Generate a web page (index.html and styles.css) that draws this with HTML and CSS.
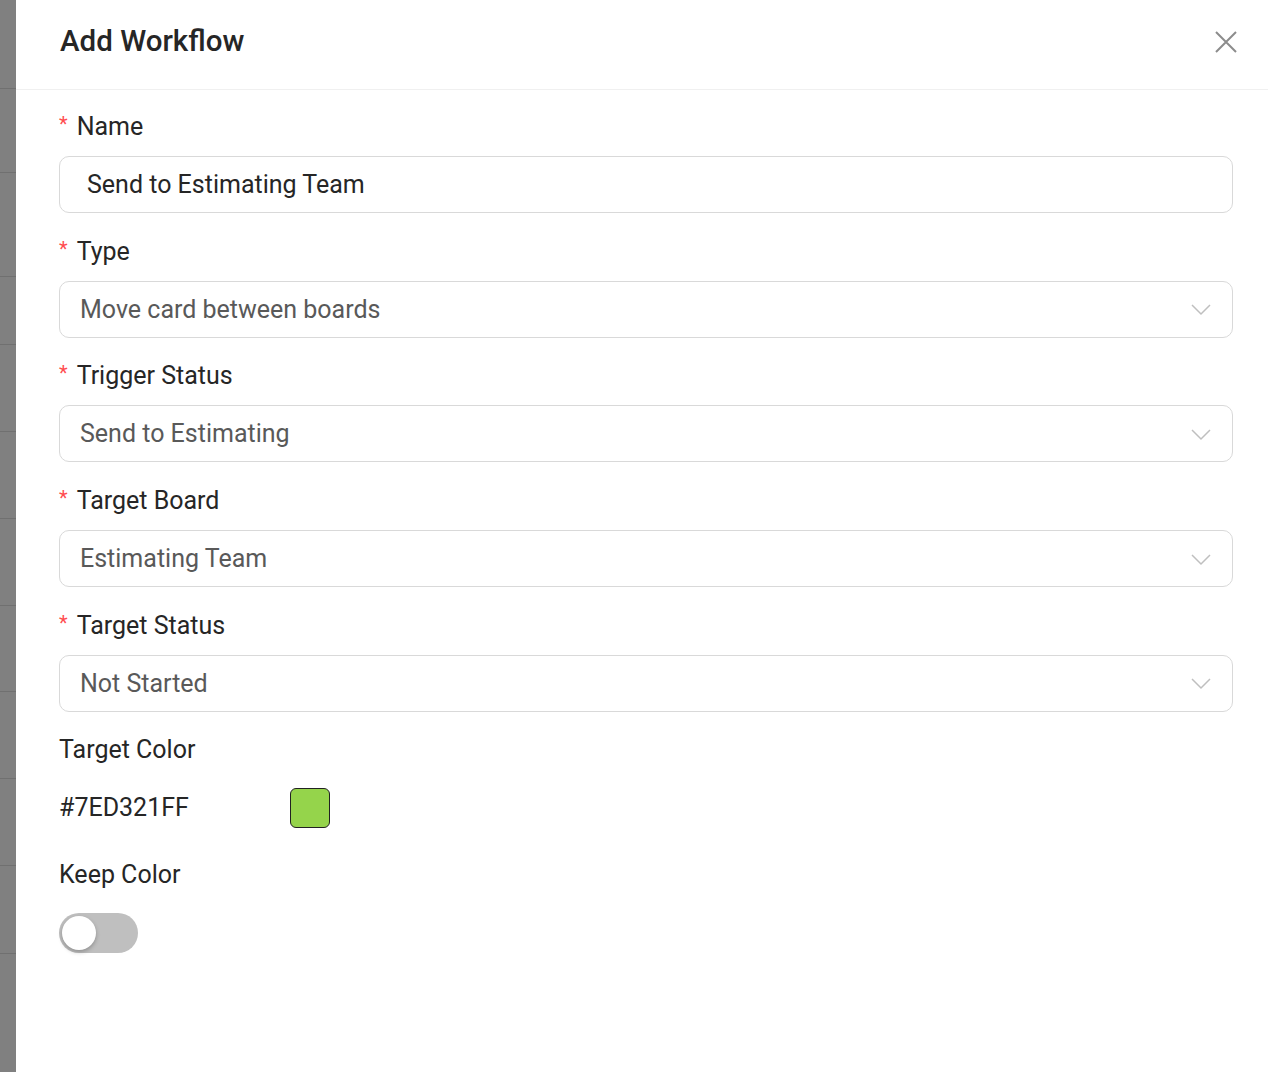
FILE: index.html
```html
<!DOCTYPE html>
<html lang="en">
<head>
<meta charset="UTF-8">
<meta name="viewport" content="width=device-width, initial-scale=1.0">
<title>Add Workflow</title>
<link rel="stylesheet" href="styles.css">
</head>
<body>

<div class="page">

<!-- BACKDROP (page behind the drawer) -->
<div class="backdrop">
  <div class="row" style="height:89px"></div>
  <div class="row" style="height:84px"></div>
  <div class="row" style="height:104px"></div>
  <div class="row" style="height:68px"></div>
  <div class="row" style="height:87px"></div>
  <div class="row" style="height:87px"></div>
  <div class="row" style="height:87px"></div>
  <div class="row" style="height:86px"></div>
  <div class="row" style="height:87px"></div>
  <div class="row" style="height:87px"></div>
  <div class="row" style="height:88px"></div>
</div>

<!-- DRAWER -->
<div class="drawer">

  <div class="drawer-header">
    <h1>Add Workflow</h1>
    <button class="close" aria-label="Close">
      <svg width="24" height="24" viewBox="0 0 24 24"><path d="M2 2 L22 22 M22 2 L2 22" stroke="#8c8c8c" stroke-width="2" fill="none"/></svg>
    </button>
  </div>

  <div class="drawer-body">

    <div class="item">
      <label class="required">Name</label>
      <div class="input">Send to Estimating Team</div>
    </div>

    <div class="item">
      <label class="required">Type</label>
      <div class="select">
        <span>Move card between boards</span>
        <svg class="arrow" width="20" height="12" viewBox="0 0 20 12"><path d="M1 1 L10 10 L19 1" stroke="#bfbfbf" stroke-width="1.5" fill="none"/></svg>
      </div>
    </div>

    <div class="item">
      <label class="required">Trigger Status</label>
      <div class="select">
        <span>Send to Estimating</span>
        <svg class="arrow" width="20" height="12" viewBox="0 0 20 12"><path d="M1 1 L10 10 L19 1" stroke="#bfbfbf" stroke-width="1.5" fill="none"/></svg>
      </div>
    </div>

    <div class="item">
      <label class="required">Target Board</label>
      <div class="select">
        <span>Estimating Team</span>
        <svg class="arrow" width="20" height="12" viewBox="0 0 20 12"><path d="M1 1 L10 10 L19 1" stroke="#bfbfbf" stroke-width="1.5" fill="none"/></svg>
      </div>
    </div>

    <div class="item">
      <label class="required">Target Status</label>
      <div class="select">
        <span>Not Started</span>
        <svg class="arrow" width="20" height="12" viewBox="0 0 20 12"><path d="M1 1 L10 10 L19 1" stroke="#bfbfbf" stroke-width="1.5" fill="none"/></svg>
      </div>
    </div>

    <div class="item">
      <label>Target Color</label>
      <div class="color-row">
        <span class="hex">#7ED321FF</span>
        <span class="swatch"></span>
      </div>
    </div>

    <div class="item">
      <label>Keep Color</label>
      <div class="switch-row">
        <span class="switch"><span class="knob"></span></span>
      </div>
    </div>

  </div>
</div>

</div>

</body>
</html>
```

FILE: styles.css
```css
/* RESET */
*{
  margin:0;
  padding:0;
  box-sizing:border-box;
  font-family:Roboto, "Liberation Sans", sans-serif;
}

body{
  background:#fff;
  color:#262626;
}

.page{
  display:flex;
  height:1072px;
  overflow:hidden;
}

/* BACKDROP */
.backdrop{
  width:16px;
  flex-shrink:0;
  background:#808080;
}

.backdrop .row{
  border-bottom:1px solid #707070;
}

/* DRAWER */
.drawer{
  flex:1;
  background:#fff;
  display:flex;
  flex-direction:column;
}

.drawer-header{
  height:90px;
  border-bottom:1px solid #f0f0f0;
  display:flex;
  align-items:center;
  justify-content:space-between;
  padding:0 30px 8px 44px;
}

.drawer-header h1{
  font-size:29.5px;
  font-weight:500;
  color:#262626;
}

.close{
  background:none;
  border:none;
  display:flex;
  padding:0;
  margin-top:3px;
}

.drawer-body{
  padding:19px 35px 0 43px;
}

/* FORM ITEMS */
.item{
  margin-bottom:20.7px;
}

.item label{
  display:block;
  height:36px;
  font-size:25px;
  line-height:36px;
  margin-bottom:11px;
  color:#262626;
}

.item label.required::before{
  content:"*";
  color:#ff4d4f;
  font-size:20px;
  line-height:1;
  margin-right:9px;
  vertical-align:4px;
}

.input,
.select{
  height:57px;
  border:1px solid #d9d9d9;
  border-radius:10px;
  font-size:25px;
  display:flex;
  align-items:center;
}

.input{
  padding:0 27px;
  color:#262626;
}

.select{
  padding:0 20px;
  color:#595959;
  justify-content:space-between;
}

.select .arrow{
  margin-right:1px;
  margin-top:2px;
}

/* COLOR */
.color-row{
  height:57px;
  display:flex;
  align-items:center;
}

.hex{
  width:231px;
  font-size:25px;
  color:#262626;
}

.swatch{
  width:40px;
  height:40px;
  background:#95d44b;
  border:1px solid #222;
  border-radius:6px;
}

/* SWITCH */
.switch-row{
  height:58px;
  display:flex;
  align-items:center;
}

.switch{
  width:79px;
  height:40px;
  border-radius:20px;
  background:#bfbfbf;
  position:relative;
}

.switch .knob{
  position:absolute;
  left:3px;
  top:3px;
  width:34px;
  height:34px;
  border-radius:50%;
  background:#fff;
  box-shadow:0 2px 4px rgba(0,0,0,0.25);
}
```
